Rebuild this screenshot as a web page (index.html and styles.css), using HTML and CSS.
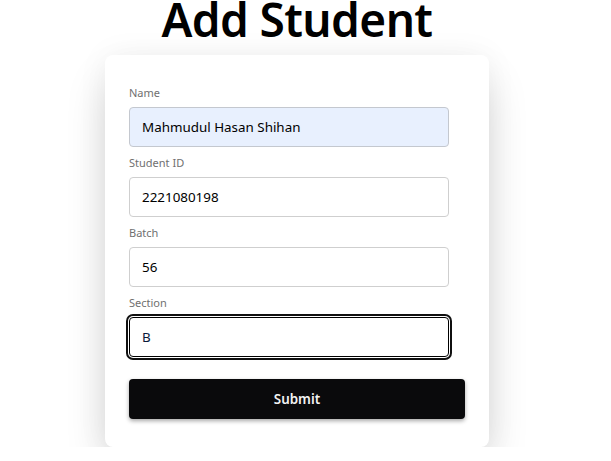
FILE: index.html
```html
<!DOCTYPE html>
<html lang="en">
<head>
<meta charset="utf-8">
<title>Add Student</title>
<link rel="stylesheet" href="styles.css">
</head>
<body>
<main class="page">
  <h1 class="title">Add Student</h1>
  <form class="card">
    <div class="field">
      <label class="label">Name</label>
      <div class="input input-autofill">Mahmudul Hasan Shihan</div>
    </div>
    <div class="field">
      <label class="label">Student ID</label>
      <div class="input">2221080198</div>
    </div>
    <div class="field">
      <label class="label">Batch</label>
      <div class="input">56</div>
    </div>
    <div class="field">
      <label class="label">Section</label>
      <div class="input input-focus">B</div>
    </div>
    <button type="button" class="submit">Submit</button>
  </form>
</main>
</body>
</html>
```
FILE: styles.css
```css
html, body {
  margin: 0;
  padding: 0;
  background: #ffffff;
}
body {
  font-family: "Noto Sans", "Open Sans", sans-serif;
  color: #000;
  overflow: hidden;
}
.page {
  width: 594px;
  display: flex;
  flex-direction: column;
  align-items: center;
}
.title {
  margin: 0;
  font-size: 46px;
  line-height: 38px;
  font-weight: 600;
  letter-spacing: -0.6px;
  height: 38px;
}
.card {
  margin-top: 17px;
  width: 336px;
  padding: 30px 24px 28px 24px;
  background: #fff;
  border-radius: 8px;
  box-shadow: 0 22px 45px -6px rgba(0, 0, 0, 0.2), 0 0 32px rgba(0, 0, 0, 0.05);
  display: flex;
  flex-direction: column;
}
.field {
  display: flex;
  flex-direction: column;
  margin-bottom: 8px;
}
.label {
  font-size: 11px;
  line-height: 16px;
  color: #707070;
  margin-bottom: 6px;
}
.input {
  box-sizing: border-box;
  width: 320px;
  height: 40px;
  border: 1px solid #cfcfcf;
  border-radius: 4px;
  padding: 0 12px;
  font-size: 13.4px;
  line-height: 38px;
  color: #000;
  background: #fff;
}
.input-autofill {
  background: #e8f0fe;
  border-color: #c4c8cf;
}
.input-focus {
  border-color: #000;
  box-shadow: 0 0 0 1px #fff, 0 0 0 3px #101010;
  color: #0a1a3a;
}
.submit {
  margin-top: 14px;
  height: 40px;
  width: 336px;
  border: none;
  border-radius: 4px;
  background: #0a0a0c;
  color: #f2f2f2;
  font-family: "Noto Sans", "Open Sans", sans-serif;
  font-size: 13.4px;
  font-weight: 600;
  box-shadow: 0 2px 4px rgba(0, 0, 0, 0.35);
}
```
